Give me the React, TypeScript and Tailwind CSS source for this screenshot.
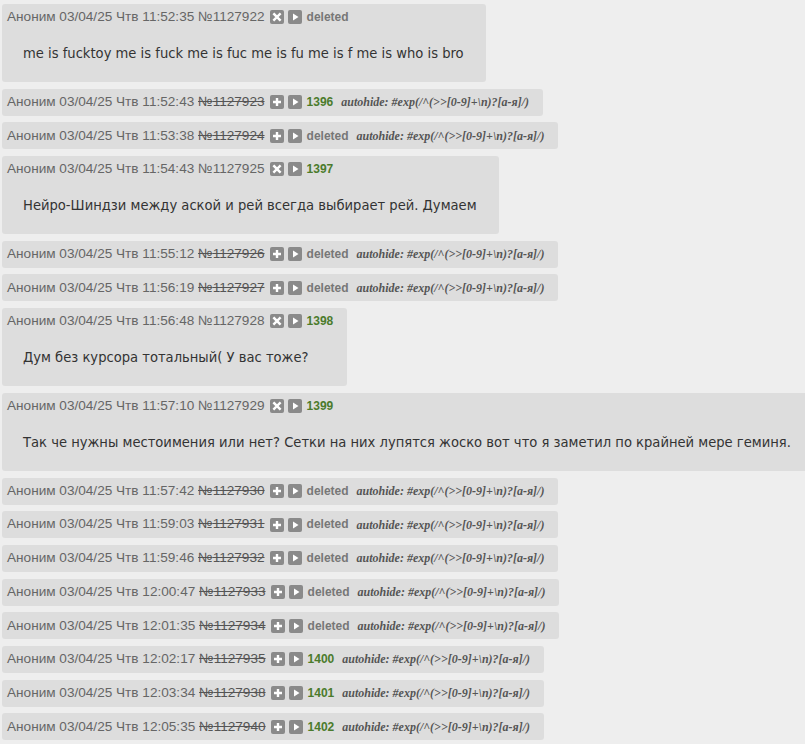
import React from "react";

type Row =
  | { kind: "post"; time: string; num: string; mark: string; text: string }
  | { kind: "hidden"; time: string; num: string; mark: string };

const rows: Row[] = [
  { kind: "post", time: "11:52:35", num: "1127922", mark: "deleted", text: "me is fucktoy me is fuck me is fuc me is fu me is f me is who is bro" },
  { kind: "hidden", time: "11:52:43", num: "1127923", mark: "1396" },
  { kind: "hidden", time: "11:53:38", num: "1127924", mark: "deleted" },
  { kind: "post", time: "11:54:43", num: "1127925", mark: "1397", text: "Нейро-Шиндзи между аской и рей всегда выбирает рей. Думаем" },
  { kind: "hidden", time: "11:55:12", num: "1127926", mark: "deleted" },
  { kind: "hidden", time: "11:56:19", num: "1127927", mark: "deleted" },
  { kind: "post", time: "11:56:48", num: "1127928", mark: "1398", text: "Дум без курсора тотальный( У вас тоже?" },
  { kind: "post", time: "11:57:10", num: "1127929", mark: "1399", text: "Так че нужны местоимения или нет? Сетки на них лупятся жоско вот что я заметил по крайней мере геминя." },
  { kind: "hidden", time: "11:57:42", num: "1127930", mark: "deleted" },
  { kind: "hidden", time: "11:59:03", num: "1127931", mark: "deleted" },
  { kind: "hidden", time: "11:59:46", num: "1127932", mark: "deleted" },
  { kind: "hidden", time: "12:00:47", num: "1127933", mark: "deleted" },
  { kind: "hidden", time: "12:01:35", num: "1127934", mark: "deleted" },
  { kind: "hidden", time: "12:02:17", num: "1127935", mark: "1400" },
  { kind: "hidden", time: "12:03:34", num: "1127938", mark: "1401" },
  { kind: "hidden", time: "12:05:35", num: "1127940", mark: "1402" },
];

const headFont = { fontFamily: "'Liberation Sans', 'DejaVu Sans', sans-serif" };

function IconBtn({ type }: { type: "x" | "plus" | "play" }) {
  return (
    <span className="inline-flex h-[14px] w-[14px] items-center justify-center rounded-[2px] bg-[#8a8a8a]">
      <svg width="14" height="14" viewBox="0 0 14 14">
        {type === "x" && (
          <path d="M4.2 4.2 L9.8 9.8 M9.8 4.2 L4.2 9.8" stroke="#fff" strokeWidth="2.4" strokeLinecap="square" />
        )}
        {type === "plus" && <path d="M7 3 V11 M3 7 H11" stroke="#fff" strokeWidth="2.4" />}
        {type === "play" && <path d="M5 3.5 L10.5 7 L5 10.5 Z" fill="#fff" />}
      </svg>
    </span>
  );
}

function Mark({ mark }: { mark: string }) {
  const deleted = mark === "deleted";
  return (
    <span
      className={"text-[12px] font-bold " + (deleted ? "text-[#777]" : "text-[#4b7b2c]")}
      style={{ fontFamily: "'Liberation Sans', sans-serif" }}
    >
      {mark}
    </span>
  );
}

function Header({ time, num, mark, hidden }: { time: string; num: string; mark: string; hidden: boolean }) {
  return (
    <div className="flex h-[24px] items-center whitespace-nowrap text-[13.6px] text-[#666]" style={headFont}>
      <span>
        Аноним 03/04/25 Чтв {time}{" "}
        <span className={hidden ? "text-[#555] line-through" : ""}>№{num}</span>
      </span>
      <span className="ml-[5px] flex items-center gap-[4px]">
        <IconBtn type={hidden ? "plus" : "x"} />
        <IconBtn type="play" />
      </span>
      <span className="ml-[5px]">
        <Mark mark={mark} />
      </span>
      {hidden && (
        <span
          className="ml-[8px] text-[12px] font-bold italic text-[#555]"
          style={{ fontFamily: "'Liberation Serif', 'DejaVu Serif', serif" }}
        >
          autohide: #exp(/^(&gt;&gt;[0-9]+\n)?[а-я]/)
        </span>
      )}
    </div>
  );
}

export default function App() {
  return (
    <div className="min-h-[744px] w-[805px] overflow-hidden bg-[#eeeeee] pl-[2px] pt-[4px]">
      <div className="flex flex-col items-start gap-[6.7px]">
        {rows.map((r, i) =>
          r.kind === "post" ? (
            <div key={i} className="h-[78px] shrink-0 rounded-[3px] bg-[#dddddd] pl-[5px] pr-[14px] pt-[1px]">
              <Header time={r.time} num={r.num} mark={r.mark} hidden={false} />
              <div
                className="mt-[14px] whitespace-nowrap pl-[16px] pr-[8px] text-[14.6px] leading-[20px] text-[#333]"
                style={{ fontFamily: "'DejaVu Sans Condensed', 'DejaVu Sans', sans-serif" }}
              >
                {r.text}
              </div>
            </div>
          ) : (
            <div key={i} className="flex h-[27px] shrink-0 items-center rounded-[3px] bg-[#dddddd] pl-[5px] pr-[14px]">
              <Header time={r.time} num={r.num} mark={r.mark} hidden={true} />
            </div>
          )
        )}
      </div>
    </div>
  );
}
